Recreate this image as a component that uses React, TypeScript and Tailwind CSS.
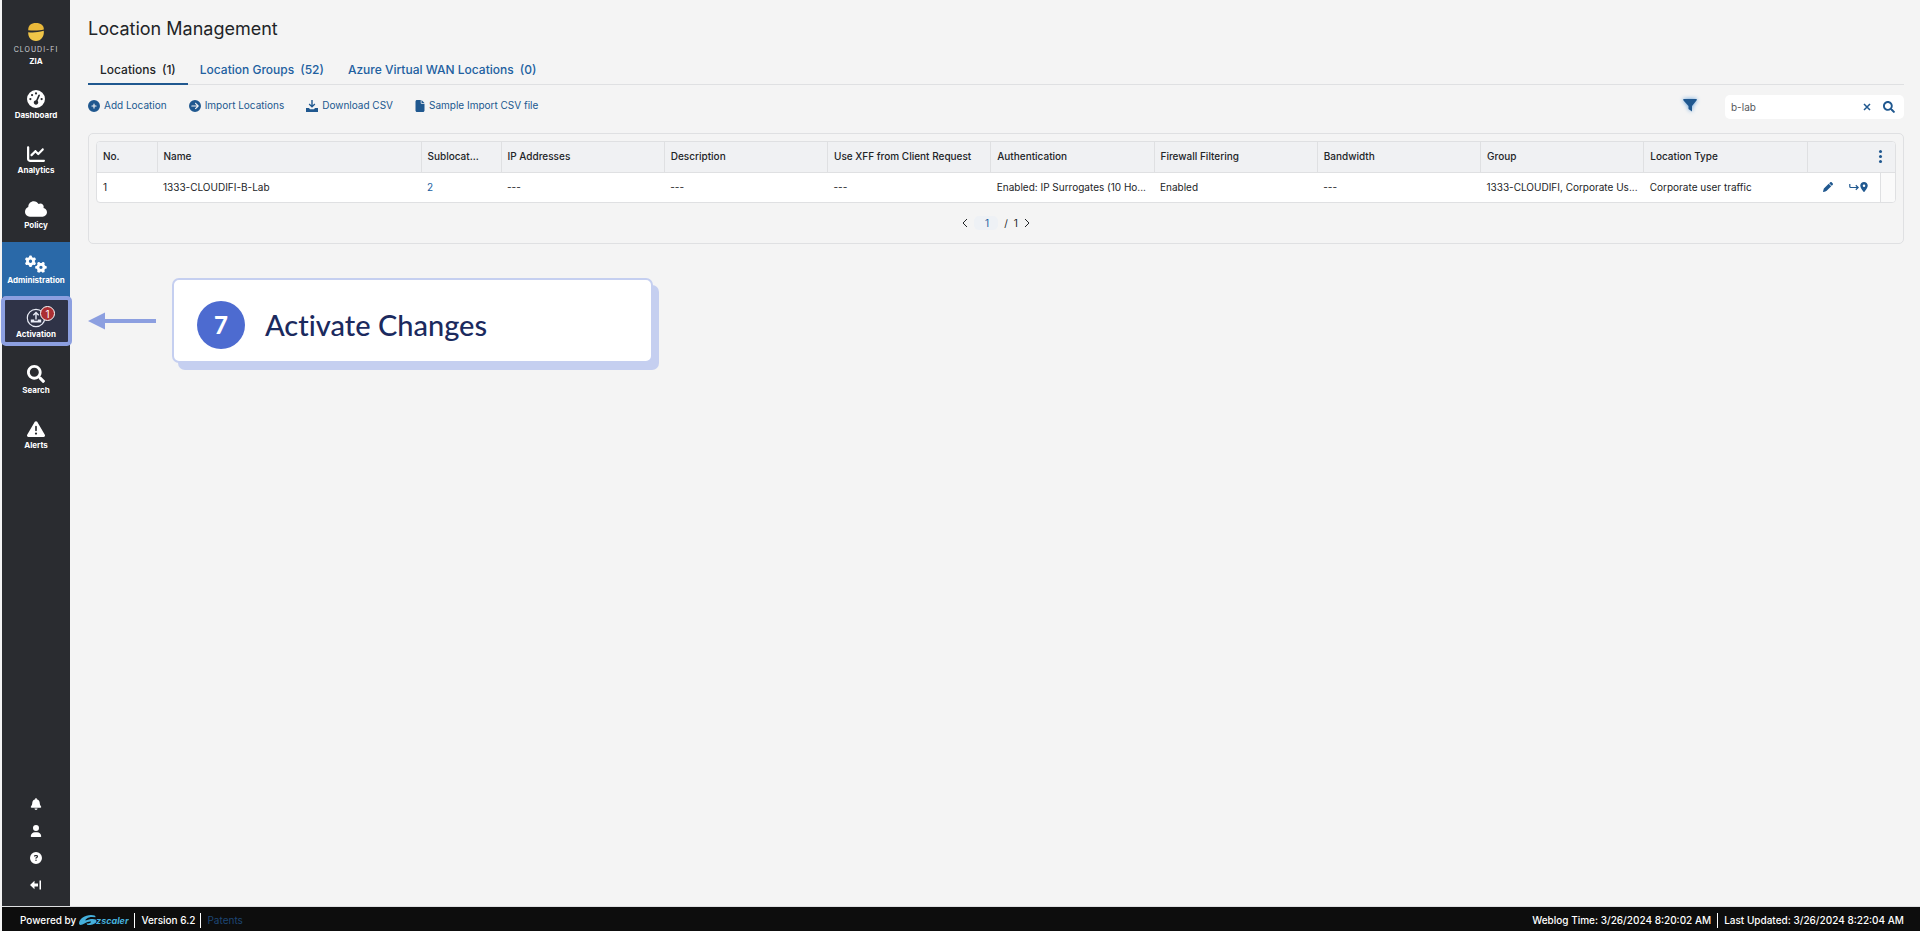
import type { ReactNode } from "react";
import { FaSearch } from "react-icons/fa";
import {
    FaGaugeHigh, FaChartLine, FaCloud, FaGears, FaTriangleExclamation,
    FaBell, FaUser, FaCircleQuestion, FaCirclePlus, FaCircleArrowRight,
    FaFile, FaPen, FaLocationDot,
} from "react-icons/fa6";

type NavItem = { label: string; icon: ReactNode; active?: boolean; marked?: boolean };

const ActivationIcon = () => (
    <span className="relative block h-5 w-5">
        <svg viewBox="0 0 20 20" className="h-5 w-5" fill="none" stroke="#e8ebf5">
            <circle cx="10" cy="10" r="8.7" strokeWidth="1.2" />
            <path d="M10 11.500V5M7.300 7.300L10 4.600l2.700 2.700" strokeWidth="1.400" />
            <path d="M4.800 11.400h3.400v1.400h3.600v-1.400h3.400v3.200H4.800z" fill="#e8ebf5" stroke="none" />
        </svg>
        <span className="absolute -top-[2px] left-[14px] flex h-[15px] w-[15px] items-center justify-center rounded-full border border-white bg-[#ab2f33] text-[10px] font-normal leading-none text-white">1</span>
    </span>
);

const DownloadIcon = () => (
    <svg viewBox="0 0 12 12" className="h-3 w-3" fill="currentColor">
        <path d="M5.300 0h1.400v5.200l1.700-1.700.9.9L6 7.700 2.700 4.400l.9-.9 1.700 1.700z" />
        <path d="M0 8h3l1 1.200h4L9 8h3v4H0z" />
    </svg>
);

const navItems: NavItem[] = [
    { label: "Dashboard", icon: <FaGaugeHigh size={18} /> },
    { label: "Analytics", icon: <FaChartLine size={18} /> },
    { label: "Policy", icon: <FaCloud size={22} /> },
    { label: "Administration", icon: <FaGears size={22} />, active: true },
    { label: "Activation", icon: <ActivationIcon />, marked: true },
    { label: "Search", icon: <FaSearch size={18} /> },
    { label: "Alerts", icon: <FaTriangleExclamation size={18} /> },
];

const BrandLogo = () => (
    <div className="flex h-[77px] flex-col items-center pt-[22px] text-white">
        <svg viewBox="0 0 18 20" className="h-5 w-[18px]">
            <path d="M1.200 8.200C1.200 3.500 4 1 9 1s8 2.500 7.800 6.500C13 8.600 6 8.600 1.200 8.200z" fill="#e9b83a" />
            <path d="M1.200 10.200c4 .3 9 .5 15.600-1.400.6 6-2.800 10.200-7.800 10.200s-8-4-7.800-8.800z" fill="#f0c548" />
        </svg>
        <span className="mt-1 text-[7px] leading-[8px] tracking-[1px] text-[#d2d4d8]">CLOUDI-FI</span>
        <span className="mt-[2px] text-[8px] font-bold leading-[10px]">ZIA</span>
    </div>
);

const Sidebar = () => (
    <aside className="flex w-[68px] shrink-0 flex-col bg-[#2a2c30] text-white">
        <BrandLogo />
        <nav>
            {navItems.map((item) => (
                <a
                    key={item.label}
                    href="#"
                    className={
                        "relative flex h-[55px] flex-col items-center text-[8px] font-bold leading-[12px] " +
                        (item.active ? "bg-[#2a69a8] pt-3" : item.marked ? "pt-[11px]" : "pt-3")
                    }
                >
                    {item.marked && <span className="absolute -left-px -right-[2px] -top-px h-[50px] rounded-[5px] border-4 border-[#8c9fe0] bg-[#2f3347]" />}
                    <span className="relative flex h-5 items-center justify-center">{item.icon}</span>
                    <span className="relative">{item.label}</span>
                </a>
            ))}
        </nav>
        <div className="mt-auto flex flex-col items-center gap-[15px] pb-[15px]">
            <button aria-label="Notifications"><FaBell size={12} /></button>
            <button aria-label="Profile"><FaUser size={12} /></button>
            <button aria-label="Help"><FaCircleQuestion size={12} /></button>
            <button aria-label="Sign out">
                <svg viewBox="0 0 12 12" className="h-3 w-3" fill="currentColor">
                    <path d="M0 6l4.500-4.200V4.400H8v3.200H4.500v2.600zM9.500 1.500H11v9H9.500z" />
                </svg>
            </button>
        </div>
    </aside>
);

const tabs = [
    { label: "Locations", count: 1 },
    { label: "Location Groups", count: 52 },
    { label: "Azure Virtual WAN Locations", count: 0 },
];

const actions = [
    { label: "Add Location", icon: <FaCirclePlus size={12} /> },
    { label: "Import Locations", icon: <FaCircleArrowRight size={12} /> },
    { label: "Download CSV", icon: <DownloadIcon /> },
    { label: "Sample Import CSV file", icon: <FaFile size={12} className="-mx-px" /> },
];

const columns = [
    { name: "No.", width: "w-[60px]", value: "1" },
    { name: "Name", width: "w-[264px]", value: "1333-CLOUDIFI-B-Lab" },
    { name: "Sublocat...", width: "w-[80px]", value: "2", link: true },
    { name: "IP Addresses", width: "", value: "---" },
    { name: "Description", width: "", value: "---" },
    { name: "Use XFF from Client Request", width: "", value: "---" },
    { name: "Authentication", width: "", value: "Enabled: IP Surrogates (10 Ho..." },
    { name: "Firewall Filtering", width: "", value: "Enabled" },
    { name: "Bandwidth", width: "", value: "---" },
    { name: "Group", width: "", value: "1333-CLOUDIFI, Corporate Us..." },
    { name: "Location Type", width: "", value: "Corporate user traffic" },
];

const LocationTable = () => (
    <div className="overflow-hidden rounded-[4px] border border-[#dfe0e2] bg-white">
        <table className="w-full table-fixed text-left text-[10px]">
            <colgroup>
                {columns.map((col) => <col key={col.name} className={col.width} />)}
                <col className="w-[73px]" />
                <col className="w-[15px]" />
            </colgroup>
            <thead>
                <tr className="h-[30px] border-b border-[#dfe0e2] bg-[#f0f1f3]">
                    {columns.map((col) => (
                        <th key={col.name} className="truncate border-r border-[#dfe0e2] pl-[6px] pr-2 font-medium">{col.name}</th>
                    ))}
                    <th colSpan={2}>
                        <button aria-label="Columns" className="ml-auto mr-[13px] flex flex-col gap-[2px]">
                            <span className="h-[3px] w-[3px] rounded-full bg-[#20588f]" />
                            <span className="h-[3px] w-[3px] rounded-full bg-[#20588f]" />
                            <span className="h-[3px] w-[3px] rounded-full bg-[#20588f]" />
                        </button>
                    </th>
                </tr>
            </thead>
            <tbody>
                <tr className="h-[30px]">
                    {columns.map((col) => (
                        <td key={col.name} className="truncate pl-[6px] pr-1">
                            {col.link ? <a href="#" className="text-[#2160a0]">{col.value}</a> : col.value}
                        </td>
                    ))}
                    <td className="border-r border-[#dfe0e2] text-[#20588f]">
                        <div className="flex items-center gap-4 pl-4">
                            <button aria-label="Edit"><FaPen size={10} /></button>
                            <button aria-label="Sublocation" className="flex items-center">
                                <svg viewBox="0 0 10 10" className="h-[10px] w-[10px]" fill="none" stroke="currentColor" strokeWidth="1.200">
                                    <path d="M.8 2v2.500q0 1 1 1H9M6.800 3.200L9.200 5.500 6.800 7.800" />
                                </svg>
                                <FaLocationDot size={10} />
                            </button>
                        </div>
                    </td>
                    <td className="bg-[#fafafa]" />
                </tr>
            </tbody>
        </table>
    </div>
);

const StepCallout = () => (
    <div className="mt-[34px] flex items-start">
        <svg viewBox="0 0 68 18" className="mt-[34px] h-[18px] w-[68px]" fill="#8c9fe0">
            <path d="M0 9L17 0.500v6.500h51v4H17v6.500z" />
        </svg>
        <div className="ml-4 flex h-[85px] w-[481px] items-center gap-5 rounded-[7px] border-2 border-[#c5cff0] bg-white pl-[23px] pt-2 shadow-[6px_7px_0_0_#c5cff0]">
            <span className="flex h-12 w-12 items-center justify-center rounded-full bg-[#4d6bd0] font-[Lato] text-[24px] font-black text-white">7</span>
            <span className="font-[Lato] text-[29px] font-medium leading-[36px] text-[#1b2a5e] [font-variant-ligatures:none]">Activate Changes</span>
        </div>
    </div>
);

const Footer = () => (
    <footer className="ml-[2px] flex h-[25px] items-center justify-between border-t border-[#dfe0e2] bg-[#0d0d0d] pl-[18px] pr-4 pt-[2px] text-[10px] font-medium text-white">
        <div className="flex items-center">
            <span>Powered by</span>
            <svg viewBox="0 0 50 12" className="ml-[3px] h-3 w-[50px]" fill="#45b0dc">
                <path d="M0 9.500C0 5 6 1 12 1c3 0 5 .8 4.500 2.200L13 3C9 3 6 5.500 6.500 6.500L10 5.500C14 4.500 18 5 17.500 7.500 17 10 12 11.500 8.500 11l-1-1.500c2 .3 4.500-.5 4.500-1.500S8 8 5.500 9.500C3 11.200 0 11.500 0 9.500z" />
                <text x="17" y="9.500" fontFamily="Inter" fontSize="9" fontStyle="italic" fontWeight="700">zscaler</text>
            </svg>
            <span className="ml-[5px] border-l border-white pl-[6px]">Version 6.2</span>
            <a href="#" className="ml-[5px] border-l border-white pl-[6px] font-normal text-[#1d4673]">Patents</a>
        </div>
        <div className="flex items-center">
            <span>Weblog Time: 3/26/2024 8:20:02 AM</span>
            <span className="ml-[6px] border-l border-white pl-[6px]">Last Updated: 3/26/2024 8:22:04 AM</span>
        </div>
    </footer>
);

export default function App() {
    return (
        <div className="flex min-h-screen flex-col bg-[#f4f4f4] font-[Inter] text-[#222427]">
            <div className="flex grow pl-[2px]">
                <Sidebar />
                <main className="min-w-0 grow pl-[18px] pr-4">
                    <h1 className="pt-[17px] text-[18px] leading-6">Location Management</h1>
                    <div className="mt-4 flex border-b border-[#dfe0e2] text-[12px] font-medium leading-[26px]" role="tablist">
                        {tabs.map((tab, i) => (
                            <button
                                key={tab.label}
                                role="tab"
                                aria-selected={i === 0}
                                className={
                                    "-mb-px flex gap-[6px] border-b-2 px-3 " +
                                    (i === 0 ? "border-[#20588f]" : "border-transparent text-[#2160a0]")
                                }
                            >
                                <span>{tab.label}</span>
                                <span>({tab.count})</span>
                            </button>
                        ))}
                    </div>
                    <div className="mt-[10px] flex h-6 items-center text-[10px] text-[#20588f]">
                        <div className="flex gap-[22px] pb-[3px]">
                            {actions.map((action) => (
                                <button key={action.label} className="flex items-center gap-1">
                                    {action.icon}
                                    {action.label}
                                </button>
                            ))}
                        </div>
                        <button aria-label="Filter" className="ml-auto pb-[3px]">
                            <svg viewBox="0 0 14 13" className="h-[13px] w-[14px] drop-shadow-[0_0_2px_#5b9bd8]" fill="currentColor">
                                <path d="M.5 0h13q.6.500 0 1.400L9 7v5.500L5.500 10V7L.5 1.400Q0 .5.500 0z" />
                            </svg>
                        </button>
                        <div className="ml-7 flex h-6 w-[179px] items-center rounded-[5px] bg-white px-[6px]">
                            <input aria-label="Search locations" defaultValue="b-lab" className="min-w-0 grow text-[10px] text-[#55585c] outline-none" />
                            <button aria-label="Clear">
                                <svg viewBox="0 0 8 8" className="mr-3 h-2 w-2" stroke="currentColor" strokeWidth="1.500">
                                    <path d="M1 1l6 6M7 1L1 7" />
                                </svg>
                            </button>
                            <button aria-label="Search" className="mr-[3px]"><FaSearch size={12} /></button>
                        </div>
                    </div>
                    <section className="mt-[14px] rounded-[5px] border border-[#dfe0e2] px-[7px] pt-[7px]">
                        <LocationTable />
                        <div className="flex h-10 items-center justify-center text-[10px]">
                            <button aria-label="Previous page">
                                <svg viewBox="0 0 6 10" className="h-[10px] w-[6px]" fill="none" stroke="currentColor"><path d="M5 1L1 5l4 4" /></svg>
                            </button>
                            <input aria-label="Page" defaultValue="1" className="ml-[6px] h-[14px] w-6 rounded-[5px] bg-[#eef1f5] pl-[2px] text-center text-[#2160a0]" />
                            <span className="ml-[6px]">/</span>
                            <span className="ml-[6px]">1</span>
                            <button aria-label="Next page" className="ml-[6px]">
                                <svg viewBox="0 0 6 10" className="h-[10px] w-[6px]" fill="none" stroke="currentColor"><path d="M1 1l4 4-4 4" /></svg>
                            </button>
                        </div>
                    </section>
                    <StepCallout />
                </main>
            </div>
            <Footer />
        </div>
    );
}
